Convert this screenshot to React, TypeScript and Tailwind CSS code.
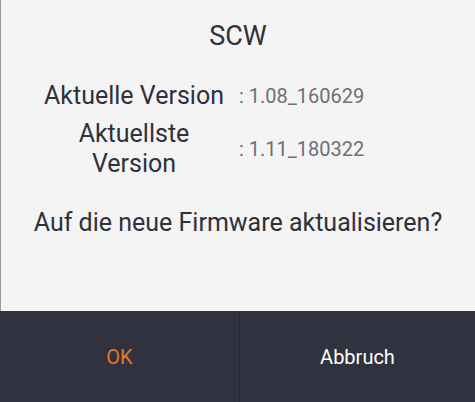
import React from "react";

export default function App() {
  return (
    <div
      className="w-[475px] h-[402px] flex flex-col bg-[#f4f4f5]"
      style={{ fontFamily: "Roboto, 'Noto Sans', sans-serif" }}
    >
      <div className="h-[311px] flex flex-col border-l border-[#9a9a9a] text-[#2f313a]">
        <div className="pt-[20px] h-[52px] text-center text-[27px] leading-[32px]">SCW</div>

        <div className="mt-[29px] flex flex-col gap-[8px]">
          <div className="flex items-center">
            <div className="ml-[40px] w-[186px] text-center text-[25px] leading-[30px]">
              Aktuelle Version
            </div>
            <div className="ml-[12px] text-[20px] text-[#6e6f74]">: 1.08_160629</div>
          </div>
          <div className="flex items-center">
            <div className="ml-[40px] w-[186px] text-center text-[25px] leading-[30px]">
              Aktuellste
              <br />
              Version
            </div>
            <div className="ml-[12px] text-[20px] text-[#6e6f74]">: 1.11_180322</div>
          </div>
        </div>

        <div className="mt-[29px] text-center text-[25px] leading-[30px]">
          Auf die neue Firmware aktualisieren?
        </div>
      </div>

      <div className="flex-1 flex bg-[#30333f]">
        <div className="w-[240px] flex items-center justify-center text-[20px] text-[#e0782f] border-r border-[#282a34]">
          OK
        </div>
        <div className="flex-1 flex items-center justify-center text-[20px] text-white">
          Abbruch
        </div>
      </div>
    </div>
  );
}
